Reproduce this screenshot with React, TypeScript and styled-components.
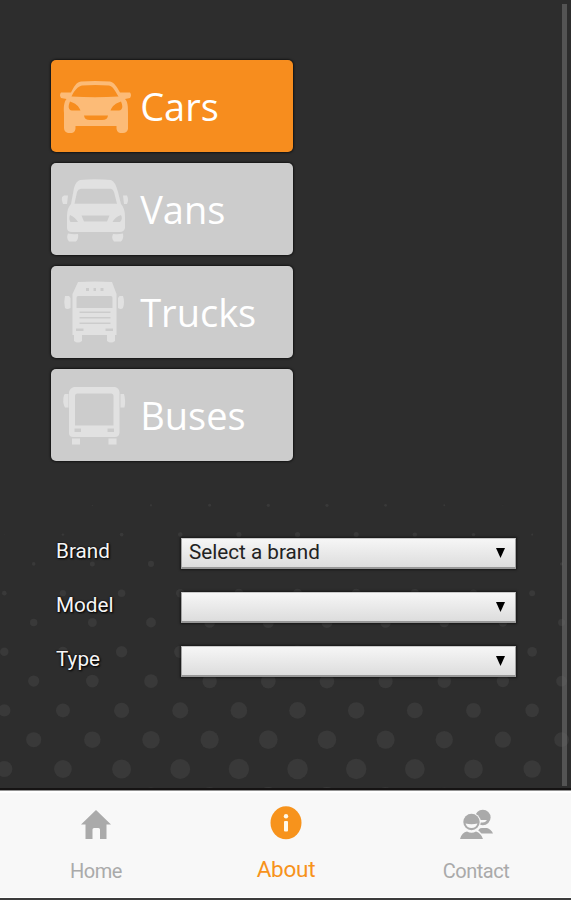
import React, { useState } from 'react';
import styled, { createGlobalStyle } from 'styled-components';

const GlobalStyle = createGlobalStyle`
  * { box-sizing: border-box; }
  html, body { margin: 0; padding: 0; background: #2d2d2d; }
`;

const Screen = styled.div`
  width: 571px;
  height: 900px;
  display: flex;
  flex-direction: column;
  overflow: hidden;
  background: #2d2d2d;
  border-bottom: 2px solid #3c3c3c;
  font-family: Roboto, "Liberation Sans", sans-serif;
`;

const Content = styled.main`
  position: relative;
  height: 790px;
  flex: none;
  padding: 60px 0 0 51px;
  border-bottom: 2px solid #151313;
`;

const Backdrop = styled.svg`
  position: absolute;
  inset: 0;
  display: block;
`;

const ScrollThumb = styled.div`
  position: absolute;
  top: 4px;
  right: 4px;
  width: 5px;
  height: 782px;
  background: rgba(110, 110, 110, 0.6);
`;

const CategoryList = styled.div`
  position: relative;
  display: flex;
  flex-direction: column;
  gap: 11px;
  width: 242px;
`;

const CategoryButton = styled.button<{ $active: boolean }>`
  display: flex;
  align-items: center;
  height: 92px;
  padding: 0 0 0 7px;
  border: 0;
  border-radius: 5px;
  background: ${(p) => (p.$active ? '#f78d1e' : '#cccccc')};
  box-shadow: 0 0 2px 1px rgba(0, 0, 0, 0.55);
  color: ${(p) => (p.$active ? '#fcbb77' : '#e1e1e1')};
`;

const CategoryIcon = styled.svg`
  width: 76px;
  height: 70px;
  flex: none;
`;

const CategoryName = styled.span`
  margin-left: 6.2px;
  color: #fff;
  font: 400 38px/52px "Open Sans", sans-serif;
  white-space: nowrap;
`;

const Form = styled.div`
  position: relative;
  display: flex;
  flex-direction: column;
  gap: 23px;
  margin: 77px 0 0 5px;
`;

const Field = styled.div`
  display: grid;
  grid-template-columns: 125px 335px;
  height: 31px;
`;

const Label = styled.label`
  color: #f6f6f6;
  font-size: 20.7px;
  line-height: 26px;
  text-shadow: 0 0 2px #000, 1px 1px 2px #000;
`;

const SelectBox = styled.div`
  display: flex;
  justify-content: space-between;
  padding: 0 10px 0 7px;
  border: 1px solid #a2a2a2;
  border-top-color: #c8c8c8;
  border-bottom: 2px solid #979797;
  background: linear-gradient(#f6f6f6, #dddddd);
  box-shadow: 0 0 2px 1px rgba(0, 0, 0, 0.5);
  color: #222;
  font-size: 20.7px;
  line-height: 27px;
`;

const Arrow = styled.svg`
  width: 9px;
  height: 10px;
  margin-top: 9px;
`;

const TabBar = styled.nav`
  flex: none;
  height: 108px;
  display: grid;
  grid-template-columns: repeat(3, 1fr);
  padding-left: 1px;
  background: #f8f8f8;
  border-top: 1px solid #929292;
  box-shadow: inset 0 2px #fff, inset 0 -1px #fff;
`;

const Tab = styled.div<{ $active?: boolean }>`
  display: flex;
  flex-direction: column;
  align-items: center;
  color: ${(p) => (p.$active ? '#f7931c' : '#aaaaaa')};
  font-size: ${(p) => (p.$active ? 22.5 : 20)}px;
  letter-spacing: ${(p) => (p.$active ? -0.25 : -0.5)}px;
  line-height: 26px;
`;

const TabIcon = styled.svg`
  width: 40px;
  height: 40px;
  margin-top: 13px;
  flex: none;
`;

const TabName = styled.span<{ $active?: boolean }>`
  margin-top: ${(p) => (p.$active ? 12 : 14)}px;
`;

/* Every vehicle is drawn in a 76 x 70 box, with its windows and lights cut out. */
const vehicles = {
  Cars: (
    <path
      fill="currentColor"
      fillRule="evenodd"
      d="M23 10.500Q37 9.500 52 10.500C56 11 59 16 62 21.500H72Q74 24 72 27L67 28C70 31 70 36 70 42V58Q69 62 65 62H62Q58 61 58.500 55H17.500Q18 61 14 62H10Q6 61 6 57V42C5.500 36 6 31 8.500 28L3 27Q1 24 3 21.500H13C16 16 18 11 23 10.500ZM24 14.500C20 15 16 20 13.500 25.500Q37 27 60.500 25.500C57 20 55 15 51 14.500Q37 13.500 24 14.500ZM12 30.500C10 35 10 39 14 39.500H22.500C21 35 17 32 12 30.500ZM63 30.500C58 32 54 35 52.500 39.500H61C65 39 65 35 63 30.500ZM26 44.500Q26.500 49 32 49H44Q49.500 49 50 44.500Z"
    />
  ),
  Vans: (
    <path
      fill="currentColor"
      fillRule="evenodd"
      d="M22 6Q37 4.500 53 6Q57 7 60 18L63 30Q67 34 67 43V54Q66 58 62 58H14Q9 58 9 54V42Q9 34 13 30L16 14Q18 7 22 6ZM23 14.700Q20 15 19 18L16.500 29.700H59L56 18Q55 15 53 14.700ZM23.500 41.500L26 47.500H49L51.500 41.500ZM12 41Q10.500 45 12.500 48H20Q17 43 12 41ZM63 41Q57 43 54.500 48H62Q65 45 63 41ZM6 21.500H10L9 30H5Q3 26 4 23ZM65 21.500H69Q71 26 69 30H66ZM10 59.500Q15 60.500 20 60Q21 65 18 67.500H11Q8 64 10 59.500ZM55 60Q60 60.500 65 59.500Q66 65 63 67.500H56Q53 64 55 60Z"
    />
  ),
  Trucks: (
    <path
      fill="currentColor"
      fillRule="evenodd"
      d="M20 5Q37 4 54 5L58.500 17V58H57V64Q53 67 49 64V58H24V64Q20 67 16 64V58H14.500V17ZM20 19Q18.500 19 18.500 21V31H54.500V21Q54.500 19 53 19ZM28 11V14H31V11ZM35.500 11V14H38V11ZM42.500 11V14H45.500V11ZM21.500 34.500V36H52.500V34.500ZM21.500 40V41.500H52.500V40ZM21.500 45.500V47H52.500V45.500ZM18 51.500V54H25.500V51.500ZM47.500 51.500V54H55V51.500ZM7 19H11L12.500 21V31Q9 33 7 31Q5.500 25 7 19ZM61.500 19H65Q67 25 65 31Q63 33 60 31V21Z"
    />
  ),
  Buses: (
    <path
      fill="currentColor"
      fillRule="evenodd"
      d="M16 7H57Q61 8 61.500 12V53Q61 57 57 57H15Q11 57 11 53V12Q12 8 16 7ZM19 13.500Q17 13.500 17 16V45.500H55.500V16Q55.500 13.500 53 13.500ZM16.500 48.500V52H23V48.500ZM49.500 48.500V52H56V48.500ZM7 14H10.500V27.500H7Q4 22 6 15ZM62.500 14H66Q68 21 66.500 27.500H62.500ZM14 58.500H22V64.500H14ZM50.500 58.500H58.500V64.500H50.500Z"
    />
  ),
};

const categories: (keyof typeof vehicles)[] = ['Cars', 'Vans', 'Trucks', 'Buses'];

const fields = [
  { label: 'Brand', value: 'Select a brand' },
  { label: 'Model', value: '' },
  { label: 'Type', value: '' },
];

function Dots() {
  const dots: React.ReactNode[] = [];
  for (let row = -1; row < 10; row++) {
    const y = 769 - row * 29.3;
    for (let col = 0; col < 10; col++) {
      const x = (row % 2 ? 33.7 : 4.3) + col * 58.65;
      const edge = (x - 290) / 285;
      const r = 10.3 - row * 0.96 - 2.2 * edge * edge;
      if (r > 0.2) dots.push(<circle key={`${row}-${col}`} cx={x} cy={y} r={r} />);
    }
  }
  return (
    <Backdrop width="571" height="788" fill="#393939">
      {dots}
    </Backdrop>
  );
}

export default function App() {
  const [active, setActive] = useState('Cars');
  return (
    <>
      <GlobalStyle />
      <Screen>
        <Content>
          <Dots />
          <CategoryList>
            {categories.map((name) => (
              <CategoryButton key={name} $active={name === active} onClick={() => setActive(name)}>
                <CategoryIcon viewBox="0 0 76 70">{vehicles[name]}</CategoryIcon>
                <CategoryName>{name}</CategoryName>
              </CategoryButton>
            ))}
          </CategoryList>
          <Form>
            {fields.map(({ label, value }) => (
              <Field key={label}>
                <Label>{label}</Label>
                <SelectBox>
                  <span>{value}</span>
                  <Arrow viewBox="0 0 9 10">
                    <path d="M0 0H9L4.5 10Z" fill="#000" />
                  </Arrow>
                </SelectBox>
              </Field>
            ))}
          </Form>
          <ScrollThumb />
        </Content>
        <TabBar>
          <Tab>
            <TabIcon viewBox="0 0 40 40">
              <path d="M20 6L35 20.500H30.500V35H24V25.500Q24 24 22.500 24H18Q16.500 24 16.500 25.500V35H9.500V20.500H5Z" fill="currentColor" />
            </TabIcon>
            <TabName>Home</TabName>
          </Tab>
          <Tab $active>
            <TabIcon viewBox="0 0 40 40">
              <ellipse cx="20" cy="18.800" rx="15.500" ry="16.500" fill="currentColor" />
              <circle cx="20" cy="12.300" r="2.200" fill="#fff8e8" />
              <rect x="18" y="17" width="4" height="10.500" rx="1" fill="#fff8e8" />
            </TabIcon>
            <TabName $active>About</TabName>
          </Tab>
          <Tab>
            <TabIcon viewBox="0 0 40 40">
              <g fill="currentColor">
                <circle cx="26.800" cy="13.500" r="7.800" />
                <path d="M22 29Q22 24 26 24H31Q35 25 37 29.500H24Z" />
              </g>
              <path d="M21 16H31Q29 19 26 18.500H21Z" fill="#f8f8f8" />
              <circle cx="15.500" cy="18" r="9.300" fill="#f8f8f8" />
              <path d="M3 35.500Q5 26 11 26H21Q26 28 28 35.500Z" fill="#f8f8f8" />
              <g fill="currentColor">
                <circle cx="15.500" cy="18" r="8.200" />
                <path d="M4 35Q6 28 11 27.500Q15.500 30 20 27.500Q25 29 27 35Z" />
              </g>
              <path d="M9.500 19.500Q15.500 21 21.500 19.500Q20 24 15.500 24Q11 24 9.500 19.500Z" fill="#f8f8f8" />
            </TabIcon>
            <TabName>Contact</TabName>
          </Tab>
        </TabBar>
      </Screen>
    </>
  );
}
